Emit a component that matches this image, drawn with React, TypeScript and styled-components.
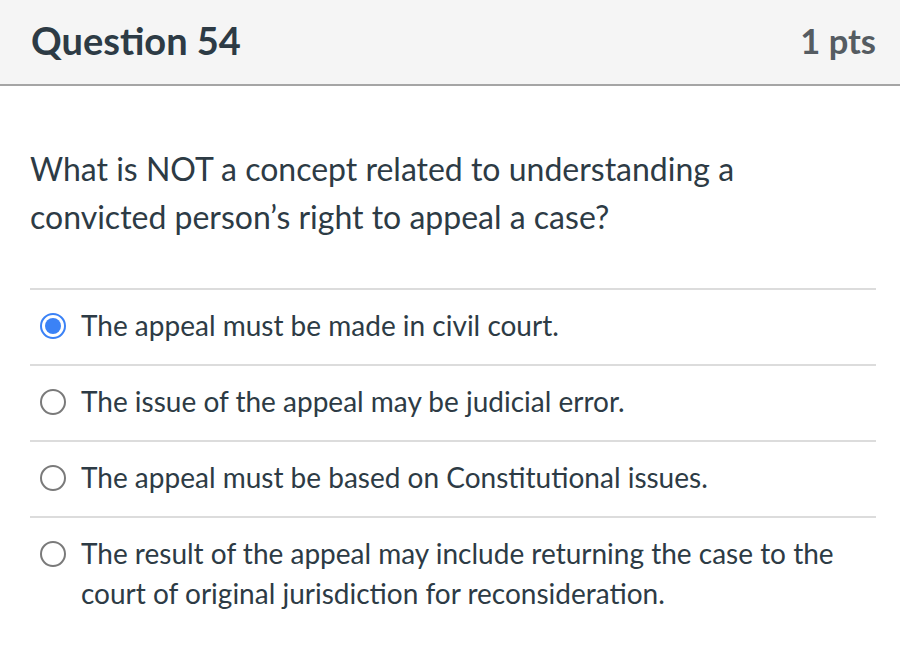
import React from 'react';
import styled, { createGlobalStyle } from 'styled-components';

const textHex = '#2d3b45';

const GlobalStyle = createGlobalStyle`
    body {
        margin: 0;
        background: #ffffff;
        font-family: Lato, "Open Sans", sans-serif;
        color: ${textHex};
    }
`;

const Header = styled.div`
    background: #f5f5f5;
    height: 86px;
    border-bottom: 2px solid #a5a5a5;
    display: flex;
    justify-content: space-between;
    align-items: center;
    padding: 0 24px 4px 31px;
    box-sizing: border-box;
`;

const Title = styled.h2`
    margin: 0;
    font-size: 38px;
    font-weight: 700;
    color: ${textHex};
`;

const Points = styled.span`
    font-size: 34.5px;
    font-weight: 700;
    color: #555c62;
`;

const Body = styled.div`
    padding: 59px 24px 0 30px;
`;

const QuestionText = styled.p`
    margin: 0 0 47px;
    font-size: 32px;
    line-height: 48px;
    padding-right: 100px;
`;

const AnswerList = styled.div`
    display: flex;
    flex-direction: column;
`;

const Answer = styled.label`
    display: flex;
    align-items: flex-start;
    gap: 15px;
    border-top: 2px solid #dcdcdc;
    padding: 15px 0 19px 10px;
    font-size: 28px;
    line-height: 40px;
`;

const Radio = styled.span<{ checked?: boolean }>`
    flex: none;
    width: 26px;
    height: 26px;
    margin-top: 8px;
    border-radius: 50%;
    box-sizing: border-box;
    border: 2px solid ${p => (p.checked ? '#3b82f6' : '#7a7a7a')};
    background: #ffffff;
    display: flex;
    align-items: center;
    justify-content: center;

    &::after {
        content: '';
        display: ${p => (p.checked ? 'block' : 'none')};
        width: 16px;
        height: 16px;
        border-radius: 50%;
        background: #3b82f6;
    }
`;

const answers = [
    { text: 'The appeal must be made in civil court.', checked: true },
    { text: 'The issue of the appeal may be judicial error.' },
    { text: 'The appeal must be based on Constitutional issues.' },
    { text: 'The result of the appeal may include returning the case to the court of original jurisdiction for reconsideration.' },
];

const App = () => {
    return (
        <>
            <GlobalStyle />
            <Header>
                <Title>Question 54</Title>
                <Points>1 pts</Points>
            </Header>
            <Body>
                <QuestionText>
                    What is NOT a concept related to understanding a convicted person’s right to appeal a case?
                </QuestionText>
                <AnswerList>
                    {answers.map(answer => (
                        <Answer key={answer.text}>
                            <Radio checked={answer.checked} />
                            <span>{answer.text}</span>
                        </Answer>
                    ))}
                </AnswerList>
            </Body>
        </>
    );
};

export default App;
